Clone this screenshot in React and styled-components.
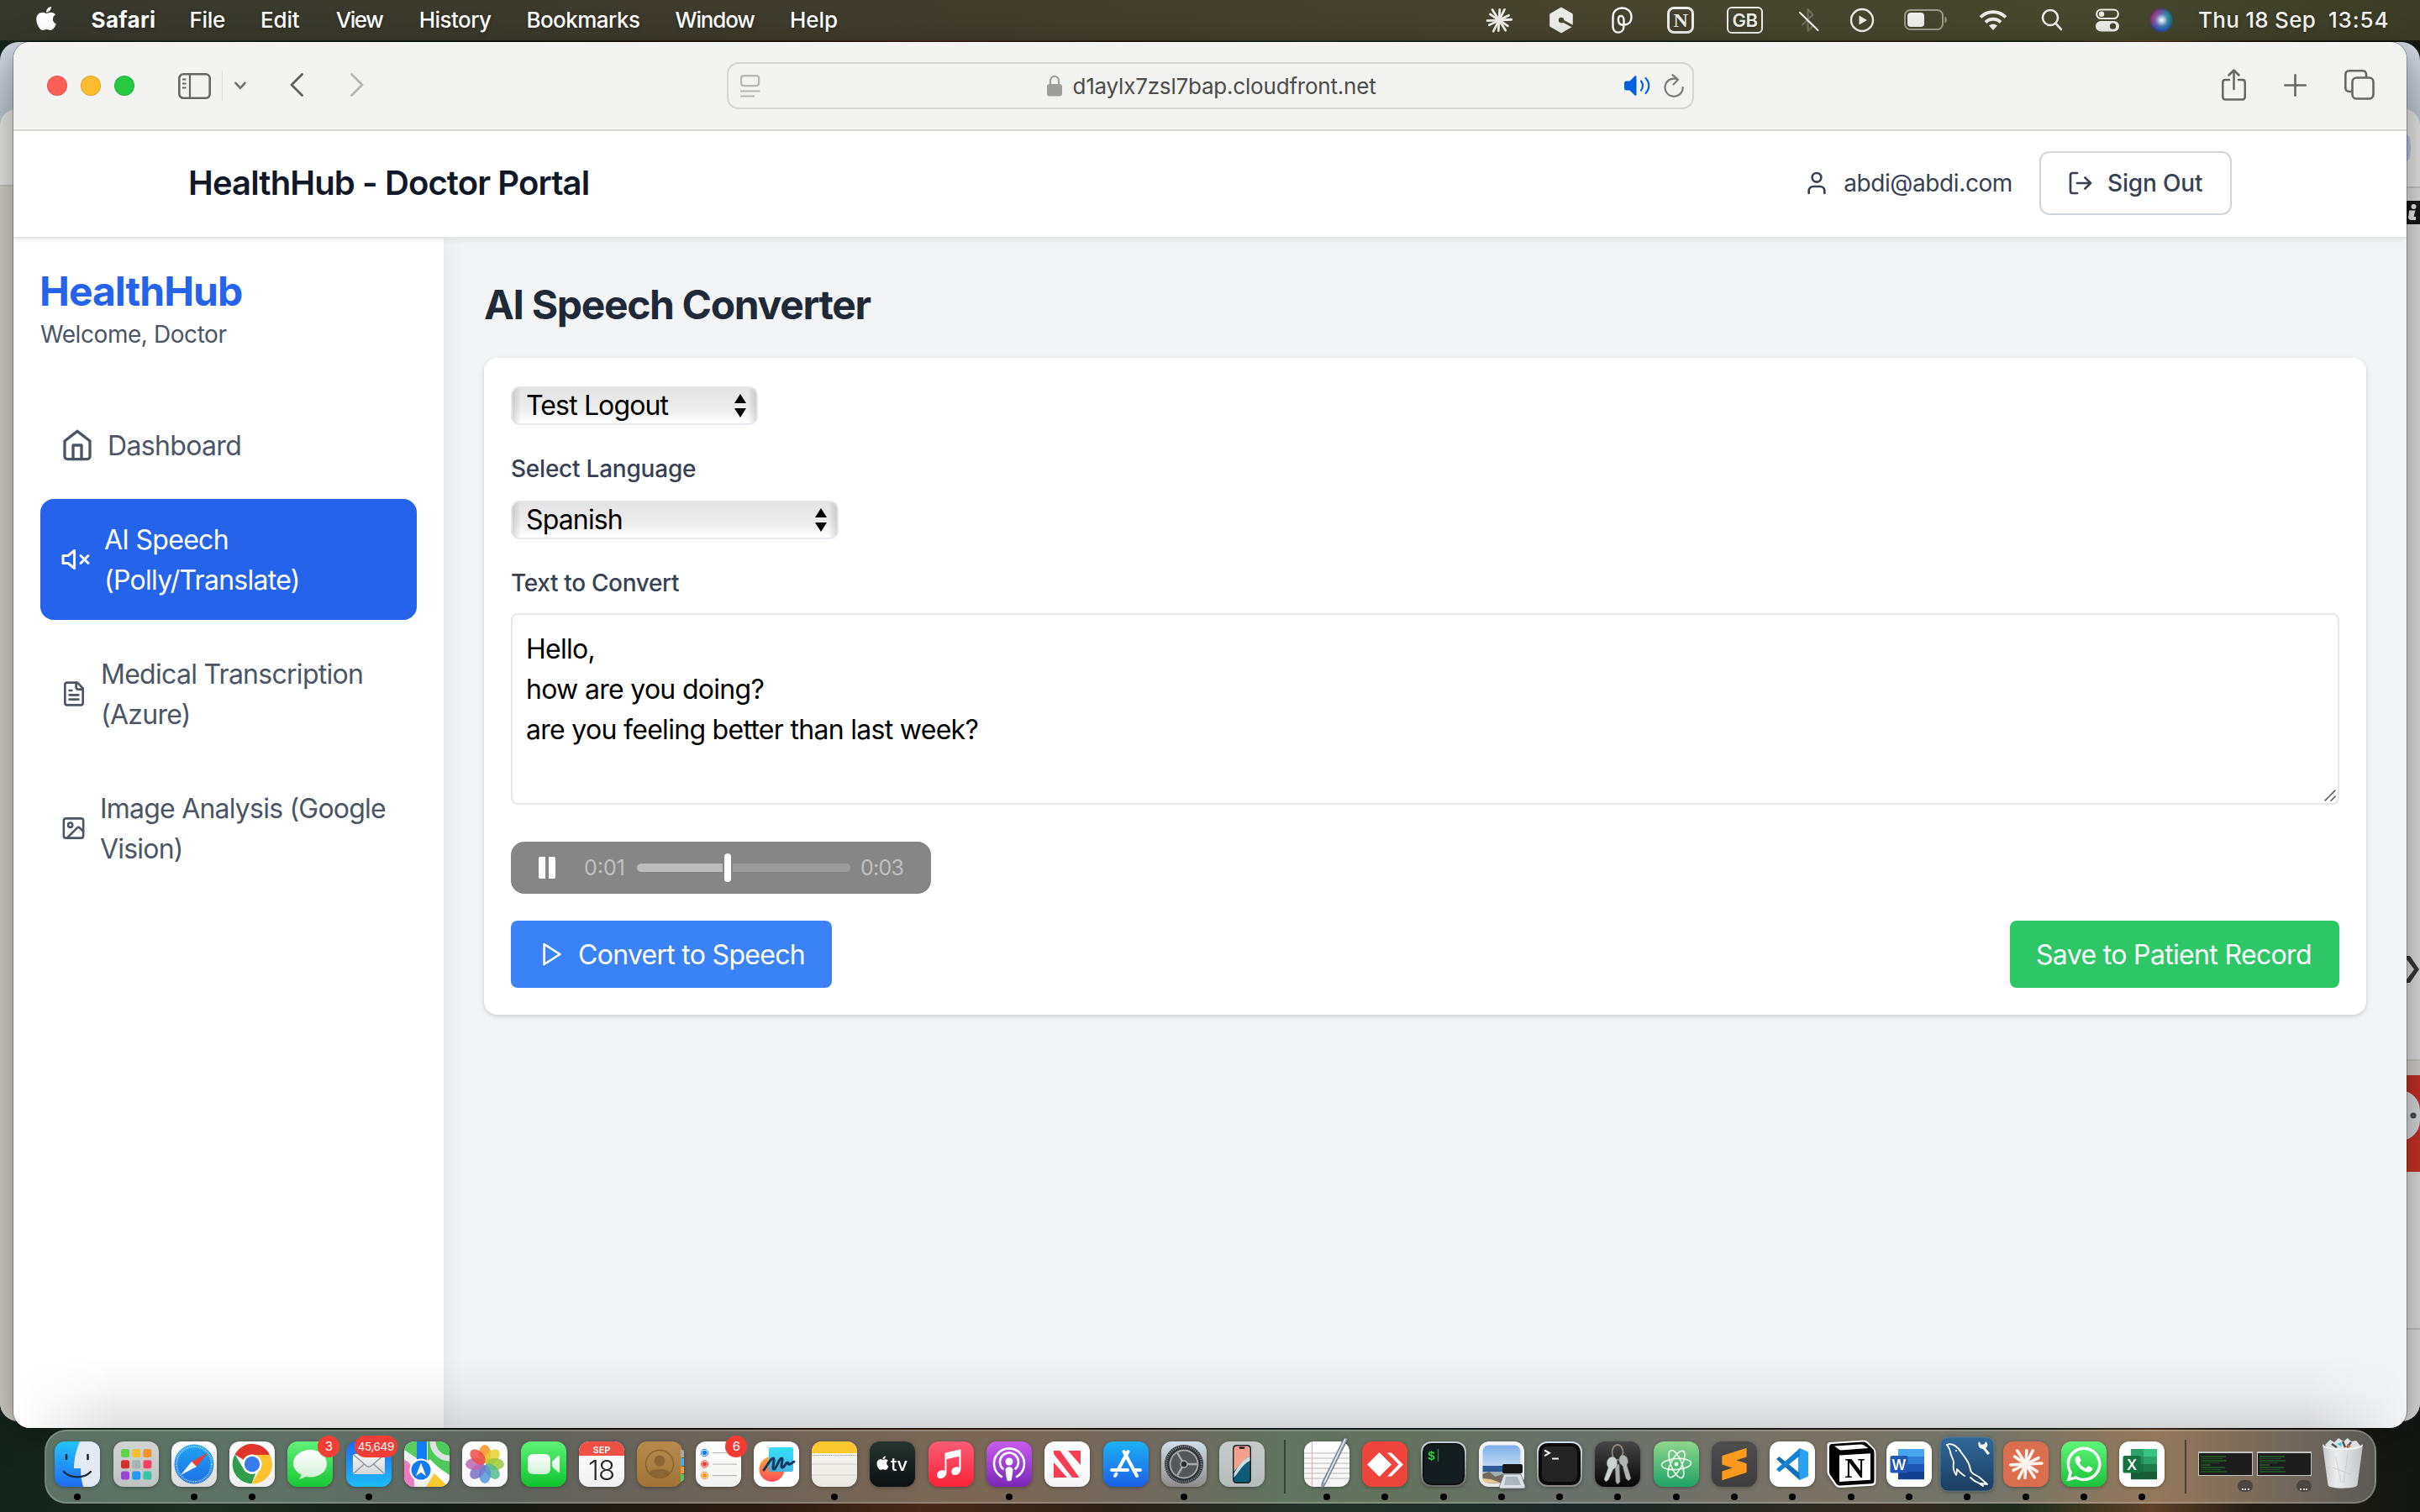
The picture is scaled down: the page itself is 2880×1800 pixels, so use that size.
import React from "react";
import styled, { createGlobalStyle } from "styled-components";
import { FaApple, FaWhatsapp } from "react-icons/fa";
import { SiSublimetext } from "react-icons/si";

const Global = createGlobalStyle`
  * { box-sizing: border-box; }
  body { margin: 0; font-family: Inter, "Liberation Sans", sans-serif; overflow: hidden; }
  svg { display: block; flex: none; }
`;

/* ---------- desktop ---------- */
const Desktop = styled.div`
  position: relative;
  width: 2880px;
  height: 1800px;
  overflow: hidden;
  background: linear-gradient(90deg, #14231b 0, #1d2e22 240px, #131a14 520px, #2a1b12 900px, #45291a 1100px, #2b2117 1330px, #22322a 1560px, #1c2826 1900px, #33291f 2260px, #1d2b1b 2400px, #5c4128 2560px, #241d16 2680px, #141713 2880px);
`;

const MenuBar = styled.div`
  display: flex;
  align-items: center;
  height: 48px;
  padding: 0 0 2px 39px;
  color: #fff;
  font-size: 26px;
  font-weight: 500;
  background: linear-gradient(90deg, #37382d 0, #403c2d 1060px, #46442f 1900px, #46472f 2500px, #3c3d28 2880px);
  text-shadow: 0 1px 4px rgba(0, 0, 0, 0.35);
`;
const AppleSlot = styled.div`
  width: 69.6px;
  padding-bottom: 2px;
`;
const MenuItem = styled.span`
  width: ${(p) => p.$w}px;
  font-weight: ${(p) => (p.$bold ? 700 : 500)};
  letter-spacing: ${(p) => p.$ls}em;
  white-space: nowrap;
`;
const Status = styled.div`
  display: flex;
  margin-left: auto;
  height: 46px;
`;
const StatusSlot = styled.div`
  display: flex;
  align-items: center;
  justify-content: center;
  width: ${(p) => p.$w}px;
  padding-top: 2px;
`;
const StatusKey = styled.span`
  display: flex;
  align-items: center;
  justify-content: center;
  width: ${(p) => p.$w}px;
  height: 32px;
  border: ${(p) => (p.$serif ? 3 : 2)}px solid #ecece9;
  border-radius: ${(p) => (p.$serif ? 8 : 6)}px;
  color: #ecece9;
  font-family: ${(p) => (p.$serif ? '"Liberation Serif", serif' : "Inter, sans-serif")};
  font-size: ${(p) => (p.$serif ? 24 : 22)}px;
  font-weight: ${(p) => (p.$serif ? 700 : 600)};
  letter-spacing: -0.02em;
`;
const Clock = styled.div`
  display: flex;
  align-items: center;
  width: 272px;
  padding-left: 8px;
  letter-spacing: 0.01em;
  white-space: nowrap;
  color: #f3f3f0;
  span:first-child { width: 155px; }
  span:last-child { letter-spacing: 0.032em; }
`;

/* ---------- windows ---------- */
const BackWindow = styled.div`
  position: absolute;
  left: 0;
  top: 50px;
  width: 2880px;
  height: 1642px;
  border-radius: 22px;
  overflow: hidden;
  display: flex;
  justify-content: space-between;
  background: linear-gradient(#d3dae4, #b8bfc9 90px);
`;
const Sliver = styled.div`
  display: flex;
  flex-direction: column;
  width: 40px;
  margin-top: 80px;
  overflow: hidden;
  border-radius: ${(p) => (p.$right ? "0 20px 0 0" : "20px 0 0 0")};
  background: ${(p) => (p.$right ? "#d6d6d6" : "#cbc9c3")};
`;
const Strip = styled.div`
  height: ${(p) => p.$h}px;
  background: ${(p) => p.$bg || "transparent"};
  padding-left: 24px;
  flex: none;
  border-bottom: ${(p) => (p.$line ? "2px solid #bdbdbc" : "0")};
`;
const AvatarEdge = styled.div`
  width: 5px;
  height: 100%;
  border-radius: 0 5px 5px 0 / 0 16px 16px 0;
  background: #aebbd8;
`;
const Pill = styled.div`
  height: 100%;
  margin-left: -24px;
  border-radius: 0 24px 24px 0;
  background: #cfd1d4;
`;

const Win = styled.div`
  position: absolute;
  left: 16px;
  top: 50px;
  width: 2848px;
  height: 1650px;
  display: flex;
  flex-direction: column;
  border-radius: 20px;
  overflow: hidden;
  background: #f3f4f6;
  box-shadow: 0 0 0 1px rgba(0, 0, 0, 0.28), 0 10px 40px rgba(0, 0, 0, 0.35);
`;
const WinShade = styled.div`
  position: absolute;
  left: 0;
  right: 0;
  bottom: 0;
  height: 84px;
  background: linear-gradient(rgba(0, 0, 0, 0), rgba(0, 0, 0, 0.04) 50%, rgba(0, 0, 0, 0.12));
  mask-image: linear-gradient(90deg, transparent 0, #000 120px, #000 2730px, transparent 2848px);
`;
const Toolbar = styled.div`
  display: grid;
  grid-template-columns: 1fr 1151px 1fr;
  align-items: center;
  height: 106px;
  flex: none;
  background: #f3f3f1;
  border-bottom: 2px solid #d9d9d7;
`;
const Tools = styled.div`
  display: flex;
  align-items: center;
  justify-content: ${(p) => (p.$end ? "flex-end" : "flex-start")};
  padding: ${(p) => (p.$end ? "0 38px 2px 0" : "0 0 0 40px")};
  gap: ${(p) => (p.$end ? 45 : 0)}px;
`;
const Lights = styled.div`
  display: flex;
  gap: 16px;
  margin-right: 52px;
`;
const Light = styled.i`
  width: 24px;
  height: 24px;
  border-radius: 50%;
  background: ${(p) => p.$c};
  box-shadow: inset 0 0 0 1px rgba(0, 0, 0, 0.12);
`;
const Split = styled.i`
  width: 1px;
  height: 36px;
  margin: 0 14px 0 13px;
  background: #dededc;
`;
const ArrowPair = styled.div`
  display: flex;
  gap: 56px;
  margin-left: 52px;
  padding-bottom: 2px;
`;
const UrlBar = styled.div`
  display: grid;
  grid-template-columns: 1fr auto 1fr;
  align-items: center;
  height: 56px;
  padding: 0 10px 0 14px;
  border: 2px solid #d5d5d3;
  border-radius: 14px;
  color: #4b4b4a;
  font-size: 26px;
  letter-spacing: -0.0078em;
`;
const UrlText = styled.div`
  display: flex;
  align-items: center;
  gap: 12px;
`;
const UrlEnd = styled.div`
  display: flex;
  align-items: center;
  justify-content: flex-end;
  gap: 16px;
`;

/* ---------- portal ---------- */
const Header = styled.header`
  display: flex;
  align-items: center;
  justify-content: space-between;
  height: 128px;
  flex: none;
  padding: 0 208px 3px;
  background: #fff;
  border-bottom: 2px solid #e5e7eb;
  box-shadow: 0 2px 6px rgba(0, 0, 0, 0.07);
  position: relative;
`;
const Brand = styled.div`
  font-size: 40px;
  font-weight: 600;
  letter-spacing: -0.0222em;
  color: #111827;
`;
const Account = styled.div`
  display: flex;
  align-items: center;
  color: #374151;
  font-size: 28px;
`;
const Email = styled.span`
  margin: 0 32px 0 16px;
  letter-spacing: -0.0142em;
`;
const SignOut = styled.button`
  display: flex;
  align-items: center;
  gap: 16px;
  width: 229px;
  height: 76px;
  padding: 0 0 0 31px;
  border: 2px solid #d1d5db;
  border-radius: 12px;
  background: #fff;
  color: #374151;
  font: 500 28px Inter, sans-serif;
  letter-spacing: -0.0057em;
  white-space: nowrap;
`;
const Body = styled.div`
  display: flex;
  flex: 1;
`;
const Side = styled.aside`
  width: 512px;
  padding: 31px 32px 0;
  background: #fff;
  box-shadow: 4px 0 24px rgba(0, 0, 0, 0.06);
`;
const Logo = styled.div`
  font-size: 48px;
  line-height: 64px;
  font-weight: 700;
  letter-spacing: -0.0204em;
  color: #2563eb;
  margin-left: -1px;
`;
const Welcome = styled.div`
  font-size: 28px;
  line-height: 40px;
  letter-spacing: -0.0155em;
  color: #4b5563;
  margin: -1px 0 64px;
`;
const Nav = styled.nav`
  display: flex;
  flex-direction: column;
  gap: 16px;
`;
const NavItem = styled.a`
  display: flex;
  align-items: center;
  gap: 16px;
  padding: 24px;
  border-radius: 16px;
  font-size: 32px;
  line-height: 48px;
  letter-spacing: ${(p) => p.$ls}em;
  white-space: pre-line;
  color: ${(p) => (p.$active ? "#fff" : "#4b5563")};
  background: ${(p) => (p.$active ? "#2563eb" : "transparent")};
`;
const NavText = styled.span`
  margin: 1px 0 -1px;
`;
const Main = styled.main`
  flex: 1;
  padding: 47px 48px 0;
`;
const Title = styled.h1`
  margin: 0 0 31px;
  font-size: 48px;
  line-height: 64px;
  font-weight: 700;
  letter-spacing: -0.028em;
  color: #1f2937;
`;
const Card = styled.section`
  display: flex;
  flex-direction: column;
  align-items: flex-start;
  height: 782px;
  padding: 34px 32px 32px;
  border-radius: 16px;
  background: #fff;
  box-shadow: 0 2px 6px rgba(0, 0, 0, 0.1), 0 2px 4px rgba(0, 0, 0, 0.06);
`;
const Picker = styled.div`
  display: flex;
  align-items: center;
  justify-content: space-between;
  width: ${(p) => p.$w}px;
  height: 46px;
  padding: 0 12px 1px 16px;
  border: 2px solid #e5e7eb;
  border-radius: 10px;
  font-size: 32px;
  letter-spacing: -0.0268em;
  color: #000;
  background:
    linear-gradient(90deg, rgba(0, 0, 0, 0.13), transparent 10px, transparent calc(100% - 10px), rgba(0, 0, 0, 0.13)),
    linear-gradient(#e4e4e4, #ececec 55%, #fff);
`;
const Label = styled.label`
  margin: ${(p) => p.$m};
  font-size: 28px;
  line-height: 40px;
  font-weight: 500;
  letter-spacing: ${(p) => p.$ls}em;
  color: #374151;
`;
const TextBox = styled.div`
  position: relative;
  width: 100%;
  height: 228px;
  padding: 17px 16px;
  border: 2px solid #e5e7eb;
  border-radius: 8px;
  font-size: 32px;
  line-height: 48px;
  letter-spacing: -0.022em;
  white-space: pre-line;
  color: #000;
`;
const Grip = styled.svg`
  position: absolute;
  right: 2px;
  bottom: 2px;
`;
const Player = styled.div`
  display: flex;
  align-items: center;
  width: 500px;
  height: 62px;
  margin: 44px 0 32px;
  padding-left: 33px;
  border-radius: 16px;
  background: #868686;
  color: #c0c0c0;
  font-size: 25px;
`;
const Pause = styled.div`
  width: 20px;
  height: 26px;
  border: solid #fff;
  border-width: 0 8px;
  border-radius: 2px;
`;
const Elapsed = styled.span`
  width: 63px;
  margin-left: 34px;
`;
const Track = styled.div`
  display: flex;
  align-items: center;
  gap: 2px;
  width: 254px;
  margin-right: 12px;
`;
const Seg = styled.i`
  height: 10px;
  width: ${(p) => p.$w}px;
  background: ${(p) => p.$c};
  border-radius: ${(p) => p.$r};
`;
const Knob = styled.i`
  width: 8px;
  height: 34px;
  border-radius: 4px;
  background: #fff;
`;
const Remaining = styled.span`
  letter-spacing: -0.03em;
`;
const Actions = styled.div`
  display: flex;
  justify-content: space-between;
  width: 100%;
`;
const Action = styled.button`
  display: flex;
  align-items: center;
  gap: 15px;
  width: ${(p) => p.$w}px;
  height: 80px;
  padding: 0 0 0 ${(p) => p.$pl}px;
  border: 0;
  border-radius: 8px;
  background: ${(p) => p.$bg};
  color: #fff;
  font: 400 32px Inter, sans-serif;
  letter-spacing: ${(p) => p.$ls}em;
  white-space: nowrap;
`;

/* ---------- dock ---------- */
const DockBar = styled.div`
  position: absolute;
  left: 53px;
  top: 1702px;
  width: 2775px;
  height: 88px;
  display: flex;
  padding: 12px 0 0 2.6px;
  border: 2px solid rgba(255, 255, 255, 0.2);
  border-radius: 26px;
  background: linear-gradient(90deg, #5d7165 0, #5f7166 300px, #5f645e 540px, #6a6259 740px, #7b6756 1120px, #6f6a60 1340px, #627462 1470px, #65725f 1620px, #69716c 1820px, #7b7265 2120px, #70746a 2290px, #94795b 2510px, #6f665d 2680px, #5b5b56 2775px);
`;
const Cell = styled.div`
  position: relative;
  width: 69.3px;
  flex: none;
  display: flex;
  flex-direction: column;
  align-items: center;
  svg { overflow: visible; filter: drop-shadow(0 1px 2px rgba(0, 0, 0, 0.3)); }
  svg svg { filter: none; }
`;
const Dot = styled.i`
  width: 8px;
  height: 8px;
  margin-top: 8px;
  border-radius: 50%;
  background: #000;
`;
const Badge = styled.span`
  position: absolute;
  top: -7px;
  right: ${(p) => p.$r}px;
  min-width: 26px;
  height: 26px;
  padding: 0 4px;
  border-radius: 13px;
  background: #f23c34;
  color: #fff;
  font-size: ${(p) => (p.$wide ? 13.5 : 15)}px;
  line-height: 26px;
  letter-spacing: -0.03em;
  text-align: center;
`;
const Divider = styled.i`
  width: 2px;
  height: 64px;
  flex: none;
  margin: -2px ${(p) => p.$mr}px 0 ${(p) => p.$ml}px;
  background: rgba(20, 25, 15, 0.55);
`;
const MiniCell = styled.div`
  display: flex;
  flex-direction: column;
  align-items: flex-end;
  gap: 5px;
  width: 65px;
  margin: 12px 4.5px 0 0;
`;
const MiniWindow = styled.div`
  width: 65px;
  height: 29px;
  padding: 3px 0 0 2px;
  border: 1px solid #c3c3c1;
  border-top-width: 2px;
  background: #1c1d1c;
  display: flex;
  flex-direction: column;
  gap: 1px;
`;
const MiniLine = styled.i`
  width: ${(p) => p.$w}px;
  height: 1.6px;
  background: #23702a;
  opacity: 0.6;
`;
const MiniBadge = styled.div`
  display: flex;
  align-items: flex-end;
  justify-content: center;
  gap: 1.4px;
  width: 18px;
  height: 14px;
  padding-bottom: 2.4px;
  border-radius: 7px;
  background: #4b4641;
  i { width: 2px; height: 2px; border-radius: 1px; background: #fff; }
`;
const Trash = styled.div`
  margin: -5px 0 0 8.5px;
`;

const Grad = ({ id, a, b }) => (
  <linearGradient id={id} x1="0" y1="0" x2="0" y2="1">
    <stop offset="0" stopColor={a} />
    <stop offset="1" stopColor={b} />
  </linearGradient>
);
const Tile = ({ id, a, b, children }) => (
  <svg width="54" height="54" viewBox="0 0 54 54">
    <defs>
      <Grad id={id} a={a} b={b || a} />
      <clipPath id={id + "-clip"}><rect width="54" height="54" rx="12" /></clipPath>
    </defs>
    <rect width="54" height="54" rx="12" fill={`url(#${id})`} />
    {children}
  </svg>
);
const Burst = ({ r, w, color }) => {
  const lens = [1, 0.84, 0.98, 0.86, 1, 0.88, 0.95, 0.85, 1, 0.86, 0.96, 0.88];
  return (
    <g stroke={color} strokeWidth={w} strokeLinecap="round">
      {lens.map((l, i) => {
        const t = (i * Math.PI) / 6 + (i % 2 ? 0.06 : -0.05);
        return <line key={i} x1="0" y1="0" x2={Math.cos(t) * r * l} y2={Math.sin(t) * r * l} />;
      })}
    </g>
  );
};

const Finder = () => (
  <Tile id="finder" a="#22c3fb" b="#1f6cf0">
    <g clipPath="url(#finder-clip)">
      <path d="M30 0C25 12 23 22 23 32h8c0 8 1 15 3 22h22V0z" fill="#e4eaf3" />
    </g>
    <path d="M14 16v5M39.500 16v5" stroke="#1c2a3c" strokeWidth="2.600" strokeLinecap="round" />
    <path d="M11 36c8 8.500 24 8.500 32 0" fill="none" stroke="#1c2a3c" strokeWidth="2.400" strokeLinecap="round" />
  </Tile>
);
const Launchpad = () => (
  <Tile id="launch" a="#cfd3d1" b="#bfc4c2">
    {["#62d24b", "#f8bd2d", "#f1932c", "#d5302c", "#a9b1b5", "#f7436a", "#9a47d6", "#1d9bf5", "#39c6a4"].map((c, i) => (
      <rect key={i} x={9 + (i % 3) * 13.2} y={9 + Math.floor(i / 3) * 13.2} width="10" height="10" rx="2.500" fill={c} />
    ))}
  </Tile>
);
const SafariIcon = () => (
  <Tile id="saf" a="#fdfdfd" b="#d9dadb">
    <defs><Grad id="saf-in" a="#1fa4f4" b="#1d6fe6" /></defs>
    <circle cx="27" cy="27" r="23.500" fill="url(#saf-in)" />
    <circle cx="27" cy="27" r="21" fill="none" stroke="#cfe6fb" strokeWidth="2.400" strokeDasharray="0.800 1.400" />
    <path d="M43.500 13.500 30 30l-6-6z" fill="#ef3e36" />
    <path d="M11 40l13-16 6 6z" fill="#f4f4f4" />
  </Tile>
);
const Chrome = () => (
  <Tile id="chr" a="#ffffff" b="#f0f0f0">
    <path d="M27 16h21.200a23 23 0 0 1-21.500 34.200L37 32z" fill="#fdc22d" />
    <path d="M6.700 15.500A23 23 0 0 1 48 16H27a11 11 0 0 0-10 6z" fill="#e0352b" />
    <path d="M6.700 15.500 17 33a11.500 11.500 0 0 0 14 5l-4.500 12.200A23.200 23.200 0 0 1 6.700 15.500z" fill="#2f9d4b" />
    <circle cx="27" cy="27" r="11.500" fill="#fff" />
    <circle cx="27" cy="27" r="9.200" fill="#3a7cec" />
  </Tile>
);
const Messages = () => (
  <Tile id="msg" a="#62f07a" b="#18c735">
    <defs><Grad id="msg-b" a="#ffffff" b="#d2f0d6" /></defs>
    <path d="M27 10c11 0 20 7 20 16.500S38 42.500 27 42.500c-2 0-4-.300-5.500-.700-2 1.700-4.500 2.700-7.500 2.700 1.500-1.500 2.500-3.200 2.500-5C10.500 36.500 7 31.700 7 26.500 7 17 16 10 27 10z" fill="url(#msg-b)" />
  </Tile>
);
const Mail = () => (
  <Tile id="mail" a="#2068f0" b="#1cbcf8">
    <defs><Grad id="mail-e" a="#f5f5f5" b="#d5d6d8" /></defs>
    <rect x="8" y="15" width="38" height="24" rx="2.500" fill="url(#mail-e)" />
    <path d="M9 16l15 13c2 1.600 4 1.600 6 0l15-13M9 38l12.500-11M45 38 32.500 27" fill="none" stroke="#8d9299" strokeWidth="1.300" />
  </Tile>
);
const Maps = () => (
  <Tile id="maps" a="#eef0ee">
    <g clipPath="url(#maps-clip)">
      <path d="M0 0h15v20L0 10z" fill="#5bcc62" />
      <path d="M28 0h26v40L28 22z" fill="#4fc95a" />
      <path d="M0 22c8 2 12 12 12 32H0z" fill="#ea7cc4" />
      <path d="M26 54 36 38l18 16z" fill="#f9cb2e" />
      <path d="M34 0a20 20 0 0 0 20 20" fill="none" stroke="#dfe2e2" strokeWidth="7" />
      <path d="M28 24 54 50" stroke="#fff" strokeWidth="8" />
      <rect x="15" width="12" height="30" fill="#0d7cf6" />
    </g>
    <circle cx="20" cy="34" r="13.500" fill="#fff" />
    <circle cx="20" cy="34" r="11.500" fill="#127cf7" />
    <path d="M20 25.500 26 41l-6-4-6 4z" fill="#fff" />
  </Tile>
);
const Photos = () => (
  <Tile id="pho" a="#ffffff" b="#f6f6f6">
    {["#f79321", "#e4d02c", "#9bc93e", "#56bb8c", "#5798d8", "#7a72c8", "#bb67b0", "#ee4f49"].map((c, i) => (
      <ellipse key={i} cx="27" cy="15" rx="7.200" ry="11" fill={c} opacity="0.85" transform={`rotate(${i * 45} 27 27)`} />
    ))}
  </Tile>
);
const FaceTime = () => (
  <Tile id="ft" a="#5df277" b="#0fc22f">
    <defs><Grad id="ft-c" a="#ffffff" b="#d1f1d6" /></defs>
    <rect x="8" y="15" width="27" height="24" rx="6" fill="url(#ft-c)" />
    <path d="M37 24l7-6.500c1-.800 2-.200 2 .800v17.400c0 1-1 1.600-2 .800L37 30z" fill="url(#ft-c)" />
  </Tile>
);
const CalendarIcon = () => (
  <Tile id="cal" a="#ffffff" b="#f1f1f1">
    <path d="M0 17V12A12 12 0 0 1 12 0h30a12 12 0 0 1 12 12v5z" fill="#ef5147" />
    <text x="27" y="13.500" textAnchor="middle" fontSize="11" fontWeight="600" fill="#fff">SEP</text>
    <text x="26.500" y="45.500" textAnchor="middle" fontSize="33" fontWeight="300" letterSpacing="-1" fill="#2a2a2a">18</text>
  </Tile>
);
const Contacts = () => (
  <Tile id="con" a="#b68a4c" b="#a17338">
    <path d="M52 10h2a2 2 0 0 1 2 2v7h-4z" fill="#a8a8a8" />
    <rect x="52" y="20" width="4" height="9" fill="#4fa8e8" />
    <rect x="52" y="30" width="4" height="8" fill="#f39a2c" />
    <path d="M52 39h4v5c0 2-2 4-4 4z" fill="#58c45a" />
    <circle cx="27" cy="27" r="16.500" fill="none" stroke="#8a6230" strokeWidth="1.400" />
    <circle cx="27" cy="23" r="6.500" fill="#8d6532" />
    <path d="M14.500 37.500c3-6 22-6 25 0A16 16 0 0 1 27 43a16 16 0 0 1-12.500-5.500z" fill="#8d6532" />
  </Tile>
);
const Reminders = () => (
  <Tile id="rem" a="#ffffff" b="#f2f2f0">
    {["#147df6", "#ee3d34", "#f2941c"].map((c, i) => (
      <g key={c}>
        <circle cx="10.500" cy={13.5 + i * 13.5} r="4.200" fill="none" stroke={c} strokeWidth="1" />
        <circle cx="10.500" cy={13.5 + i * 13.5} r="2.800" fill={c} />
        <rect x="20" y={13 + i * 13.5} width="29" height="1.200" fill="#bcbcbc" />
      </g>
    ))}
  </Tile>
);
const Freeform = () => (
  <Tile id="free" a="#ffffff">
    <defs><Grad id="free-a" a="#f9a63c" b="#fb4c55" /><Grad id="free-b" a="#26ddfb" b="#39b4e4" /></defs>
    <circle cx="21.500" cy="33" r="15" fill="url(#free-a)" />
    <rect x="18" y="7" width="29" height="29" rx="2" fill="url(#free-b)" opacity="0.940" />
    <path d="M12 34c5-6 8-14 11-14s-2 13 1 13 6-13 9-13-2 11 1 11 4-6 6-6 0 3 3 2 3-2 5-3" fill="none" stroke="#14375e" strokeWidth="3" strokeLinecap="round" />
  </Tile>
);
const Notes = () => (
  <Tile id="not" a="#f8f8f6" b="#e9e7e0">
    <path d="M0 14V12A12 12 0 0 1 12 0h30a12 12 0 0 1 12 12v2z" fill="#fbc92e" />
    <path d="M1 16.500h52" stroke="#9a9a96" strokeWidth="1" strokeDasharray="1.200 1" />
    <path d="M0 27h54M0 40h54" stroke="#d1d0cc" strokeWidth="1" />
  </Tile>
);
const AppleTv = () => (
  <Tile id="atv" a="#26352f" b="#0c1012">
    <FaApple x="6" y="16" size={19} color="#fff" />
    <text x="25" y="35" fontSize="22" fontWeight="500" fill="#fff" letterSpacing="-0.500">tv</text>
  </Tile>
);
const Music = () => (
  <Tile id="mus" a="#fb5c74" b="#fa2338">
    <path d="M38 9.500 21 13.200c-1 .200-1.500.800-1.500 1.800v20c-1-.700-2.300-1-4-.700-3.500.600-5.500 2.900-5.500 5.700 0 2.600 2 4.400 5 4 4-.500 6.500-3.500 6.500-7.500V21l15-3.200V31c-1.200-.600-2.500-.800-4-.500-3 .500-5.200 2.700-5.200 5.500 0 2.700 2 4.400 4.700 4 4-.500 6.500-3.500 6.500-7.500V10.800c0-1-.300-1.500-1.500-1.300z" fill="#fff" />
  </Tile>
);
const Podcasts = () => (
  <Tile id="pod" a="#c75bf0" b="#7a28b5">
    <circle cx="27" cy="24" r="4.500" fill="#fff" />
    <path d="M22.500 34c0-5 9-5 9 0L30 45c-.500 3-5.500 3-6 0z" fill="#fff" />
    <path d="M19.500 32.500a11 11 0 1 1 15 0M18 42a18 18 0 1 1 18 0" fill="none" stroke="#fff" strokeWidth="2.600" strokeLinecap="round" />
  </Tile>
);
const News = () => (
  <Tile id="news" a="#ffffff" b="#f6f6f6">
    <path d="M11 25v18h16z" fill="#fb3c55" />
    <path d="M43 28V11H28z" fill="#fb3c55" />
    <path d="M11 11h8l24 32H33L11 15z" fill="#fb3c55" />
    <path d="M18.500 11h2L43 41v2h-1.500zM11 17.500v-2L32.500 43h-3z" fill="#fff" />
  </Tile>
);
const AppStore = () => (
  <Tile id="as" a="#1cb2f6" b="#1c60e6">
    <g stroke="#fff" strokeWidth="4" strokeLinecap="round">
      <path d="M29.500 12 18 33M24.500 12 40 41M10 34h19M37 34h7M15.500 38.500 14 41" />
    </g>
  </Tile>
);
const Settings = () => (
  <Tile id="set" a="#cfdfe9" b="#8f8b8a">
    <circle cx="27" cy="27" r="23" fill="#2f3234" />
    <circle cx="27" cy="27" r="21" fill="none" stroke="#7b8084" strokeWidth="2.600" strokeDasharray="1.200 1.200" />
    <circle cx="27" cy="27" r="16.500" fill="#54585b" stroke="#a2a6a9" strokeWidth="2" />
    <path d="M27 27h15.500M27 27l-7.800-13.400M27 27l-7.800 13.400" stroke="#a9adb0" strokeWidth="2.400" />
    <circle cx="27" cy="27" r="4" fill="#2b2d30" stroke="#a9adb0" strokeWidth="1.600" />
  </Tile>
);
const PhoneMirror = () => (
  <Tile id="pm" a="#c6cccb" b="#b6bcba">
    <rect x="16" y="4" width="22" height="46" rx="4.500" fill="#1c2226" />
    <rect x="17.500" y="5.500" width="19" height="43" rx="3.200" fill="#0d5b77" />
    <path d="M17.500 9c0-2 1.500-3.500 3.500-3.500h12c2 0 3.500 1.500 3.500 3.500v9c-8 3-12 10-19 18z" fill="#f5a08c" />
    <path d="M17.500 38c6-10 11-17 19-20v5c-9 4-13 14-19 20z" fill="#c9dedd" />
    <rect x="23.500" y="6.500" width="7" height="2.200" rx="1.100" fill="#111" />
  </Tile>
);

const TextEdit = () => (
  <Tile id="te" a="#ffffff" b="#f5f5f5">
    <path d="M0 14h54M0 20h54M0 26h54M0 32h54M0 38h54M0 44h54" stroke="#b9b9b9" strokeWidth="1" />
    <path d="M9.500 1v52" stroke="#f0a4a4" strokeWidth="1" />
    <path d="M48-5l4 2-27 54-4 6 0-7z" fill="#8fa2b4" stroke="#56636f" strokeWidth="0.800" />
    <path d="M49-3 24 49" stroke="#e6edf4" strokeWidth="1.500" />
  </Tile>
);
const AnyDesk = () => (
  <Tile id="ad" a="#ef443b">
    <path d="M20.500 13 35 27.500 20.500 42 6 27.500z" fill="#fff" />
    <path d="M30 13.500h5L49 27.500 35 41.500h-5l13.500-14z" fill="#fff" />
  </Tile>
);
const ITerm = () => (
  <Tile id="it" a="#c4d2d8" b="#6c6c6c">
    <rect x="2" y="2" width="50" height="50" rx="10.500" fill="#0a0c0d" />
    <rect x="3.500" y="3.500" width="47" height="47" rx="9" fill="#141d20" />
    <text x="8" y="21.500" fontSize="15" fontWeight="700" fontFamily="Liberation Mono, monospace" fill="#27d33c">$</text>
    <path d="M20.500 9v15" stroke="#1f9a30" strokeWidth="1.200" />
  </Tile>
);
const Preview = () => (
  <Tile id="pv" a="#f4f4f4" b="#e8e8e8">
    <defs><Grad id="pv-sky" a="#7fb0ea" b="#c0d9f4" /></defs>
    <path d="M4.500 12c0-4 3-7.500 7.500-7.500h30c4.500 0 7.500 3.500 7.500 7.500v18h-45z" fill="url(#pv-sky)" />
    <rect x="4.500" y="29" width="45" height="7" fill="#2c5b95" />
    <path d="M4.500 36h45v6c0 4.500-3 7.500-7.500 7.500H12c-4.500 0-7.500-3-7.500-7.500z" fill="#9fb0b6" />
    <path d="M4.500 39l8-3 7 6 9-3v10.500H12c-4.500 0-7.500-3-7.500-7.500z" fill="#73695d" />
    <path d="M4.500 44l10 1 12 4.500H12c-4.500 0-7.500-2.500-7.500-5.500z" fill="#e7c88f" />
    <path d="M30 39h20l5 14c.500 2-1 3-2.500 3h-26c-1.500 0-2.800-1-2-3z" fill="#dde2e6" stroke="#6e757c" strokeWidth="0.800" />
    <path d="M32 42h14l4 10H30z" fill="#8b99a8" opacity="0.600" />
    <rect x="28" y="27" width="24" height="11" rx="2" fill="#17181a" />
  </Tile>
);
const Terminal = () => (
  <Tile id="tm" a="#d4e2ea" b="#8a8786">
    <rect x="2" y="2" width="50" height="50" rx="10.500" fill="#0b0b0b" />
    <rect x="6" y="6" width="42" height="42" rx="7" fill="#242424" />
    <path d="M9 10.500l6 3.300-6 3.300M18 20.500h8" fill="none" stroke="#f4f4f4" strokeWidth="2" />
  </Tile>
);
const Keychain = () => (
  <Tile id="kc" a="#474747" b="#050505">
    <ellipse cx="27" cy="13" rx="6.500" ry="9" fill="none" stroke="#8f8675" strokeWidth="1.800" />
    <g stroke="#6f7475" strokeWidth="0.600">
      <path d="M32 16a7.500 7.500 0 0 1 6 12l5 16-3 3-3-3-4-15a7.500 7.500 0 0 1-1-13z" fill="#b0b6b4" />
      <path d="M24 28l5-1 1 21-3 3-2-3z" fill="#a9afad" />
      <path d="M21 18a8 8 0 0 1 1 15l-6 13-3 2-2-3 5-14a8 8 0 0 1 5-13z" fill="#cdd3d2" />
    </g>
  </Tile>
);
const Atom = () => (
  <Tile id="atm" a="#8fd68b" b="#1fa368">
    <g fill="none" stroke="#eefaec" strokeWidth="1.600">
      <ellipse cx="27" cy="27" rx="6.500" ry="17.500" transform="rotate(-22 27 27)" />
      <ellipse cx="27" cy="27" rx="6.500" ry="17.500" transform="rotate(28 27 27)" />
      <ellipse cx="27" cy="27" rx="6.500" ry="17.500" transform="rotate(86 27 27)" />
    </g>
    <circle cx="27" cy="27" r="2.400" fill="#eefaec" />
  </Tile>
);
const Sublime = () => (
  <Tile id="sub" a="#4d4d4d" b="#3e3e3e">
    <SiSublimetext x="8" y="8" size={38} color="#ff9a1c" />
  </Tile>
);
const VsCode = () => (
  <Tile id="vs" a="#ffffff">
    <path d="M36 8 46 12.500v29L36 46 34 44V10z" fill="#2b9ff0" />
    <path d="M8 21l3.500-3 24 19.500V46z" fill="#1070b8" />
    <path d="M8 33l3.500 3.500L36 17V8z" fill="#1483d2" />
  </Tile>
);
const Notion = () => (
  <svg width="54" height="54" viewBox="0 0 54 54">
    <path d="M2 1 42-1.500c2 0 4 1 5.500 2.500L55 9c1 1 1.500 3 1.500 5v34c0 3-2 4.500-4.500 4.700L14 55c-3 0-5-1-6.500-3.500L1 42c-2-2.500-2.500-4-2.500-7V5c0-2.500 1-3.800 3.500-4z" fill="#fff" />
    <path d="M4 3 41 .500c2 0 3.500.500 5 2L53 9c1 1 1.500 3 1.500 5v33c0 2-1 3-3 3.200L14 52.500c-2 0-3.500-.500-4.500-2L3 41c-1.500-2-2-3-2-6V7c0-2.500 1-3.800 3-4z" fill="#000" />
    <path d="M7 5.500 38 3.500c1.500 0 3 0 4.500 1.200L47.500 8 14 10.500z" fill="#fff" />
    <path d="M13 16.500 50 14.200v31.500L13 48z" fill="#fff" />
    <text x="31.500" y="42.500" textAnchor="middle" fontFamily="Liberation Serif, serif" fontWeight="700" fontSize="33" fill="#000">N</text>
  </svg>
);
const Office = ({ id, rows, badge, letter }) => (
  <Tile id={id} a="#ffffff">
    <g>
      {rows.map((c, i) => <rect key={i} x="14" y={9 + i * 9} width="31" height="9.200" fill={c} />)}
      {id === "xl" && <path d="M14 9h15v36H14z" fill="#15613a" opacity="0.350" />}
    </g>
    <rect x="4.500" y="17" width="21" height="20.500" rx="2" fill={badge} />
    <text x="15" y="33.500" textAnchor="middle" fontSize="17" fontWeight="600" fill="#fff">{letter}</text>
  </Tile>
);
const MySql = () => (
  <svg width="54" height="54" viewBox="0 0 54 54">
    <defs><Grad id="my" a="#30699a" b="#1b3d5f" /></defs>
    <rect x="-5" y="-5" width="64" height="64" rx="9" fill="url(#my)" stroke="#5d87a5" strokeWidth="0.800" />
    <path d="M3 4c6-3 14 3 17 9 5 7 10 12 11 21 1 5 7 6 11 9l9 8-8-1 3 3-6-4c-3-1-7-4-9-6" fill="none" stroke="#fff" strokeWidth="1.800" strokeLinecap="round" strokeLinejoin="round" />
    <path d="M3 4c2 3 4 5 4 9 1 5 4 8 4 12-1 5-1 9 3 15 1-3 1-5 1-7 3 4 6 6 9 8" fill="none" stroke="#fff" strokeWidth="1.800" strokeLinecap="round" strokeLinejoin="round" />
    <circle cx="14" cy="11" r="1" fill="#fff" />
    <path d="M41 0l3 4 4-1 1-3c3 2 3 6 0 8l5 6-2.500 2L46 9c-4 0-7-4-5-9z" fill="#fff" />
  </svg>
);
const Claude = () => (
  <Tile id="cl" a="#dc6e50">
    <g transform="translate(27 27)"><Burst r={19} w={3.6} color="#fff5ee" /></g>
  </Tile>
);
const WhatsApp = () => (
  <Tile id="wa" a="#5ff47a" b="#1bc23c">
    <FaWhatsapp x="3.500" y="3.500" size={47} color="#fff" />
  </Tile>
);

const dockMain = [
  [Finder, 1], [Launchpad], [SafariIcon, 1], [Chrome, 1], [Messages, 0, "3"], [Mail, 1, "45,649"], [Maps], [Photos], [FaceTime],
  [CalendarIcon], [Contacts], [Reminders, 0, "6"], [Freeform], [Notes, 1], [AppleTv], [Music], [Podcasts, 1], [News], [AppStore],
  [Settings, 1], [PhoneMirror],
];
const Word = () => <Office id="wd" letter="W" badge="#2158b8" rows={["#46a5ee", "#2f7cd6", "#1e58bb", "#133f91"]} />;
const Excel = () => <Office id="xl" letter="X" badge="#14743f" rows={["#35c384", "#2ba267", "#1f7d4b", "#1a5c38"]} />;
const dockApps = [TextEdit, AnyDesk, ITerm, Preview, Terminal, Keychain, Atom, Sublime, VsCode, Notion, Word, MySql, Claude, WhatsApp, Excel];

const Mini = () => (
  <MiniCell>
    <MiniWindow>
      {[30, 26, 31, 22, 12, 29, 24, 31].map((w, i) => <MiniLine key={i} $w={w} />)}
    </MiniWindow>
    <MiniBadge><i /><i /><i /></MiniBadge>
  </MiniCell>
);

const Dock = () => (
  <DockBar>
    {dockMain.map(([Icon, run, badge], i) => (
      <Cell key={i}>
        <Icon />
        {run ? <Dot /> : null}
        {badge && <Badge $wide={badge.length > 2} $r={badge.length > 2 ? 0.5 : 0}>{badge}</Badge>}
      </Cell>
    ))}
    <Divider $ml={14.9} $mr={14.6} />
    {dockApps.map((Icon, i) => <Cell key={i}><Icon /><Dot /></Cell>)}
    <Divider $ml={16} $mr={14.6} />
    <Mini />
    <Mini />
    <Trash>
      <svg width="48" height="63" viewBox="0 0 48 63">
        <defs><linearGradient id="tr" x1="0" x2="1"><stop offset="0" stopColor="#c9cacc" /><stop offset="0.350" stopColor="#eceded" /><stop offset="1" stopColor="#c4c5c7" /></linearGradient></defs>
        <path d="M3 9 9 3l5 3 5-5 6 4 5-4 4 4 6-1 5 6-8 8H10z" fill="#dfe0e1" />
        <path d="M11 8l6 4M24 5l3 7M34 6l-5 6" stroke="#4c5156" strokeWidth="2.400" />
        <path d="M17 8l5-2 1 5z" fill="#35c6d6" />
        <path d="M29 8l5 3-4 2z" fill="#d96b3c" />
        <path d="M0 9c6 7 42 7 48 0L41.500 57c-1 5-33.500 5-35 0z" fill="url(#tr)" />
        <path d="M0 9c6 7 42 7 48 0" fill="none" stroke="#f7f7f7" strokeWidth="1.600" />
        <path d="M16 24l6 30M30 20l-5 34M12 36l22 8" stroke="#b5b7ba" strokeWidth="1" opacity="0.500" />
      </svg>
    </Trash>
  </DockBar>
);

/* ---------- stroke icons ---------- */
const Line = ({ w = 32, h = w, children }) => (
  <svg width={w} height={h} viewBox="0 0 24 24" fill="none" stroke="currentColor" strokeWidth="2" strokeLinecap="round" strokeLinejoin="round">
    {children}
  </svg>
);
const HomeIcon = () => <Line w={40}><path d="m3 9 9-7 9 7v11a2 2 0 0 1-2 2H5a2 2 0 0 1-2-2z" /><path d="M9 22V12h6v10" /></Line>;
const MuteIcon = () => <Line w={36} h={40}><path d="M11 5 6 9H2v6h4l5 4z" /><path d="m22 9-6 6M16 9l6 6" /></Line>;
const FileIcon = () => <Line w={32} h={40}><path d="M15 2H6a2 2 0 0 0-2 2v16a2 2 0 0 0 2 2h12a2 2 0 0 0 2-2V7Z" /><path d="M14 2v4a2 2 0 0 0 2 2h4M10 9H8M16 13H8M16 17H8" /></Line>;
const ImageIcon = () => <Line w={31} h={40}><rect x="3" y="3" width="18" height="18" rx="2" /><circle cx="9" cy="9" r="2" /><path d="m21 15-3.086-3.086a2 2 0 0 0-2.828 0L6 21" /></Line>;
const UserIcon = () => <Line><path d="M19 21v-2a4 4 0 0 0-4-4H9a4 4 0 0 0-4 4v2" /><circle cx="12" cy="7" r="4" /></Line>;
const ExitIcon = () => <Line><path d="M9 21H5a2 2 0 0 1-2-2V5a2 2 0 0 1 2-2h4M16 17l5-5-5-5M21 12H9" /></Line>;
const PlayIcon = () => <Line><path d="m5 3 14 9-14 9z" /></Line>;
const UpDown = () => (
  <svg width="14" height="28" viewBox="0 0 14 28"><path d="M7 0 14 11H0zM7 28 0 17h14z" fill="#000" /></svg>
);

const menu = [["Safari", 117, 0.0121], ["File", 84.5, -0.0119], ["Edit", 89.6, -0.009], ["View", 99, -0.054], ["History", 127.7, -0.021], ["Bookmarks", 177.2, -0.021], ["Window", 136.5, -0.0455], ["Help", 60, -0.0024]];

const StatusIcons = () => (
  <Status>
    <StatusSlot $w={74}><svg width="32" height="32" viewBox="-16 -16 32 32"><Burst r={14.8} w={2.8} color="#ecece9" /></svg></StatusSlot>
    <StatusSlot $w={74}>
      <svg width="28" height="32" viewBox="0 0 28 32">
        <path d="M14 1.500 27 9v14L14 30.500 1 23V9z" fill="#ecece9" stroke="#ecece9" strokeWidth="1.600" strokeLinejoin="round" />
        <circle cx="14" cy="16" r="3.200" fill="#46472f" />
        <path d="M14 16 28 23.500" stroke="#46472f" strokeWidth="3" />
      </svg>
    </StatusSlot>
    <StatusSlot $w={70}>
      <svg width="25" height="32" viewBox="0 0 25 32" fill="none" stroke="#fff" strokeWidth="2.400">
        <path d="M1.500 12C1.500-2 23.500-2 23.500 12c0 7-4 10-11 9.500-6-.500-5.500-10.500-2-10.500s4 2 4 6v6c0 10-13 10-13 1z" />
      </svg>
    </StatusSlot>
    <StatusSlot $w={70}><StatusKey $w={32} $serif>N</StatusKey></StatusSlot>
    <StatusSlot $w={83}><StatusKey $w={43}>GB</StatusKey></StatusSlot>
    <StatusSlot $w={70}>
      <svg width="26" height="30" viewBox="0 0 26 30" fill="none" strokeWidth="2.200" strokeLinecap="round" strokeLinejoin="round">
        <path d="M5 20.500 17.500 8.500 11.500 2v26l6.500-6.500L11.500 15" stroke="#6f705c" />
        <path d="M2 6 23.500 27" stroke="#ecece9" />
      </svg>
    </StatusSlot>
    <StatusSlot $w={56}><svg width="30" height="30" viewBox="0 0 30 30"><circle cx="15" cy="15" r="13" fill="none" stroke="#ecece9" strokeWidth="2.400" /><path d="M11.500 9.500 21 15l-9.500 5.500z" fill="#ecece9" /></svg></StatusSlot>
    <StatusSlot $w={96}><svg width="52" height="26" viewBox="0 0 52 26"><rect x="1" y="1" width="45" height="23" rx="6.500" fill="none" stroke="#9b9c8c" strokeWidth="2" /><path d="M48.500 8.500c3 1 3 7 0 8z" fill="#9b9c8c" /><rect x="4" y="4" width="20" height="17" rx="4" fill="#ecece9" /></svg></StatusSlot>
    <StatusSlot $w={64}><svg width="34" height="26" viewBox="0 0 34 26" fill="none" stroke="#ecece9" strokeWidth="4"><path d="M2 9.500C10 1 24 1 32 9.500M8 15.500c5-5 13-5 18 0" /><path d="M17 25l-5-5.500c3-2.500 7-2.500 10 0z" fill="#ecece9" stroke="none" /></svg></StatusSlot>
    <StatusSlot $w={76}><svg width="26" height="28" viewBox="0 0 26 28" fill="none" stroke="#ecece9" strokeWidth="2.600" strokeLinecap="round"><circle cx="11" cy="11" r="9" /><path d="M17.500 18 24 25" /></svg></StatusSlot>
    <StatusSlot $w={56}><svg width="28" height="28" viewBox="0 0 28 28"><rect x="1.200" y="1.500" width="25.600" height="10.500" rx="5.200" fill="none" stroke="#ecece9" strokeWidth="2.200" /><circle cx="7" cy="6.700" r="3.200" fill="#ecece9" /><rect x="0" y="15" width="28" height="12.500" rx="6.200" fill="#ecece9" /><circle cx="20.500" cy="21.200" r="3.600" fill="#46472f" /></svg></StatusSlot>
    <StatusSlot $w={72}>
      <svg width="28" height="28" viewBox="0 0 28 28">
        <defs>
          <radialGradient id="siri" cx="0.520" cy="0.500" r="0.500"><stop offset="0" stopColor="#fff" /><stop offset="0.300" stopColor="#a9cfe6" stopOpacity="0.800" /><stop offset="0.700" stopColor="#3c4fa0" stopOpacity="0.150" /><stop offset="1" stopColor="#1c2345" stopOpacity="0.600" /></radialGradient>
          <linearGradient id="siri2" x1="0" y1="0.200" x2="1" y2="0.500"><stop offset="0" stopColor="#d2336e" /><stop offset="0.400" stopColor="#8a4fa0" /><stop offset="0.700" stopColor="#2c8f96" /><stop offset="1" stopColor="#17806c" /></linearGradient>
          <linearGradient id="siri3" x1="0" y1="0.500" x2="0" y2="1"><stop offset="0" stopColor="#2a5fc8" stopOpacity="0" /><stop offset="1" stopColor="#2a5fc8" /></linearGradient>
        </defs>
        <circle cx="14" cy="14" r="14" fill="url(#siri2)" />
        <circle cx="14" cy="14" r="14" fill="url(#siri3)" />
        <circle cx="14" cy="14" r="14" fill="url(#siri)" />
      </svg>
    </StatusSlot>
    <Clock><span>Thu 18 Sep</span><span>13:54</span></Clock>
  </Status>
);

export default function App() {
  return (
    <Desktop>
      <Global />
      <MenuBar>
        <AppleSlot><FaApple size={32} color="#fff" /></AppleSlot>
        {menu.map(([t, w, ls], i) => <MenuItem key={t} $w={w} $ls={ls} $bold={i === 0}>{t}</MenuItem>)}
        <StatusIcons />
      </MenuBar>

      <BackWindow>
        <Sliver>
          <Strip $h={92} $bg="#dfdfde" $line />
        </Sliver>
        <Sliver $right>
          <Strip $h={30} $bg="#dedede" />
          <Strip $h={32} $bg="#dedede"><AvatarEdge /></Strip>
          <Strip $h={32} $bg="#dedede" $line />
          <Strip $h={15} />
          <Strip $h={28} $bg="#151515">
            <svg width="16" height="28" viewBox="0 0 16 28"><circle cx="8.500" cy="7" r="3" fill="#e0e0e0" /><path d="M3 11.500h7.500L8.500 19H11v4H6c-4 0-4.500-3-3.500-5.500z" fill="#e0e0e0" /></svg>
          </Strip>
          <Strip $h={870} />
          <Strip $h={34}>
            <svg width="16" height="34" viewBox="0 0 16 34"><path d="M0 1h4l11 16L4 33H0v-4l9-12L0 5z" fill="#343434" /></svg>
          </Strip>
          <Strip $h={92} $line />
          <Strip $h={17} $bg="#cbc9c4" />
          <Strip $h={18} $bg="#b92d24" />
          <Strip $h={60} $bg="#bd2d24">
            <Pill>
              <svg width="40" height="60" viewBox="0 0 40 60"><circle cx="32" cy="30" r="3.600" fill="#4b4b4b" /></svg>
            </Pill>
          </Strip>
          <Strip $h={37} $bg="#c12f25" />
          <Strip $h={188} $line />
        </Sliver>
      </BackWindow>

      <Win>
        <Toolbar>
          <Tools>
            <Lights><Light $c="#ff5f57" /><Light $c="#febc2e" /><Light $c="#28c840" /></Lights>
            <svg width="39" height="31" viewBox="0 0 39 31" fill="none" stroke="#666664" strokeWidth="2.600"><rect x="1.300" y="1.300" width="36.400" height="28.400" rx="5" /><path d="M14 1.500v28" strokeWidth="2.200" /><path d="M5 7.500h4.500M5 12.500h4.500M5 17.500h4.500" strokeWidth="2" /></svg>
            <Split />
            <svg width="14" height="10" viewBox="0 0 14 10" fill="none" stroke="#6f6f6d" strokeWidth="2.600" strokeLinecap="round"><path d="m1.500 1.800 5.500 6 5.500-6" /></svg>
            <ArrowPair>
              <svg width="16" height="28" viewBox="0 0 16 28" fill="none" stroke="#5f5f5d" strokeWidth="2.800" strokeLinecap="round" strokeLinejoin="round"><path d="M14.500 1.500 2 14l12.500 12.500" /></svg>
              <svg width="16" height="28" viewBox="0 0 16 28" fill="none" stroke="#b5b5b3" strokeWidth="2.800" strokeLinecap="round" strokeLinejoin="round"><path d="M1.500 1.500 14 14 1.500 26.500" /></svg>
            </ArrowPair>
          </Tools>
          <UrlBar>
            <svg width="24" height="27" viewBox="0 0 24 27" fill="none" stroke="#b5b5b3" strokeWidth="2.200"><rect x="1.100" y="1.100" width="21" height="12" rx="3" /><path d="M0 19.500h23.500M0 25.500h17" /></svg>
            <UrlText>
              <svg width="18" height="26" viewBox="0 0 18 26"><path d="M4 12V7.500c0-7.500 10-7.500 10 0V12" fill="none" stroke="#9d9d9b" strokeWidth="2.200" /><rect y="11" width="18" height="14.500" rx="3" fill="#9d9d9b" /></svg>
              d1aylx7zsl7bap.cloudfront.net
            </UrlText>
            <UrlEnd>
              <svg width="31" height="24" viewBox="0 0 31 24"><path d="M14.500 1.200v21.600c0 1-1.200 1.300-2 .600L6.500 17.500H2.500C1 17.500 0 16.700 0 15V9c0-1.700 1-2.500 2.500-2.500h4L12.500.600c.800-.700 2-.400 2 .600z" fill="#0060df" /><path d="M20 6.500c2.600 3.500 2.600 7.500 0 11M25.500 3c5 5.500 5 12.500 0 18" fill="none" stroke="#0060df" strokeWidth="2.200" strokeLinecap="round" /></svg>
              <svg width="24" height="28" viewBox="0 0 24 28" fill="none" stroke="#7b7b79" strokeWidth="2.200" strokeLinecap="round" strokeLinejoin="round"><path d="M17 6.800A10.600 10.600 0 1 0 22.700 16M10.500 1.200l6.500 5.600-5.400 5.600" /></svg>
            </UrlEnd>
          </UrlBar>
          <Tools $end>
            <svg width="29" height="38" viewBox="0 0 29 38" fill="none" stroke="#666664" strokeWidth="2.500" strokeLinecap="round" strokeLinejoin="round"><path d="M9 13H4.500C2.500 13 1.300 14 1.300 16v17c0 2.200 1.200 3.500 3.200 3.500h20c2 0 3.200-1.300 3.200-3.500V16c0-2-1.200-3-3.200-3H20M14.500 24V2M8.500 7.500l6-6 6 6" /></svg>
            <svg width="27" height="27" viewBox="0 0 27 27" stroke="#666664" strokeWidth="2.600" strokeLinecap="round"><path d="M13.500 1.300v24.400M1.300 13.500h24.400" /></svg>
            <svg width="36" height="36" viewBox="0 0 36 36" fill="none" stroke="#666664" strokeWidth="2.600"><rect x="9.500" y="9.500" width="25" height="25" rx="5" /><path d="M9.500 26H6c-3 0-4.700-1.500-4.700-4.500v-15.500c0-3 1.700-4.700 4.700-4.700h15.500c3 0 4.500 1.700 4.500 4.700v3.500" /></svg>
          </Tools>
        </Toolbar>

        <Header>
          <Brand>HealthHub - Doctor Portal</Brand>
          <Account>
            <UserIcon />
            <Email>abdi@abdi.com</Email>
            <SignOut><ExitIcon />Sign Out</SignOut>
          </Account>
        </Header>

        <Body>
          <Side>
            <Logo>HealthHub</Logo>
            <Welcome>Welcome, Doctor</Welcome>
            <Nav>
              <NavItem $ls={-0.0205}><HomeIcon /><NavText>Dashboard</NavText></NavItem>
              <NavItem $active $ls={-0.0225}><MuteIcon /><NavText>{"AI Speech\n(Polly/Translate)"}</NavText></NavItem>
              <NavItem $ls={-0.0226}><FileIcon /><NavText>{"Medical Transcription\n(Azure)"}</NavText></NavItem>
              <NavItem $ls={-0.0246}><ImageIcon /><NavText>{"Image Analysis (Google\nVision)"}</NavText></NavItem>
            </Nav>
          </Side>
          <Main>
            <Title>AI Speech Converter</Title>
            <Card>
              <Picker $w={294}>Test Logout<UpDown /></Picker>
              <Label $m="32px 0 18px" $ls={-0.0082}>Select Language</Label>
              <Picker $w={390}>Spanish<UpDown /></Picker>
              <Label $m="32px 0 16px" $ls={-0.0123}>Text to Convert</Label>
              <TextBox>
                {"Hello,\nhow are you doing?\nare you feeling better than last week?"}
                <Grip width="14" height="14" viewBox="0 0 14 14" stroke="#5a5a5a" strokeWidth="1.6" strokeLinecap="round"><path d="M1 13 13 1M8 13.200 13.200 8" /></Grip>
              </TextBox>
              <Player>
                <Pause />
                <Elapsed>0:01</Elapsed>
                <Track>
                  <Seg $w={102} $c="#bcbcbc" $r="5px 0 0 5px" />
                  <Knob />
                  <Seg $w={140} $c="#9b9b9b" $r="0 5px 5px 0" />
                </Track>
                <Remaining>0:03</Remaining>
              </Player>
              <Actions>
                <Action $w={382} $pl={33} $bg="#3b82f6" $ls={-0.0221}><PlayIcon />Convert to Speech</Action>
                <Action $w={392} $pl={31} $bg="#2dc766" $ls={-0.0206}>Save to Patient Record</Action>
              </Actions>
            </Card>
          </Main>
        </Body>
        <WinShade />
      </Win>

      <Dock />
    </Desktop>
  );
}
